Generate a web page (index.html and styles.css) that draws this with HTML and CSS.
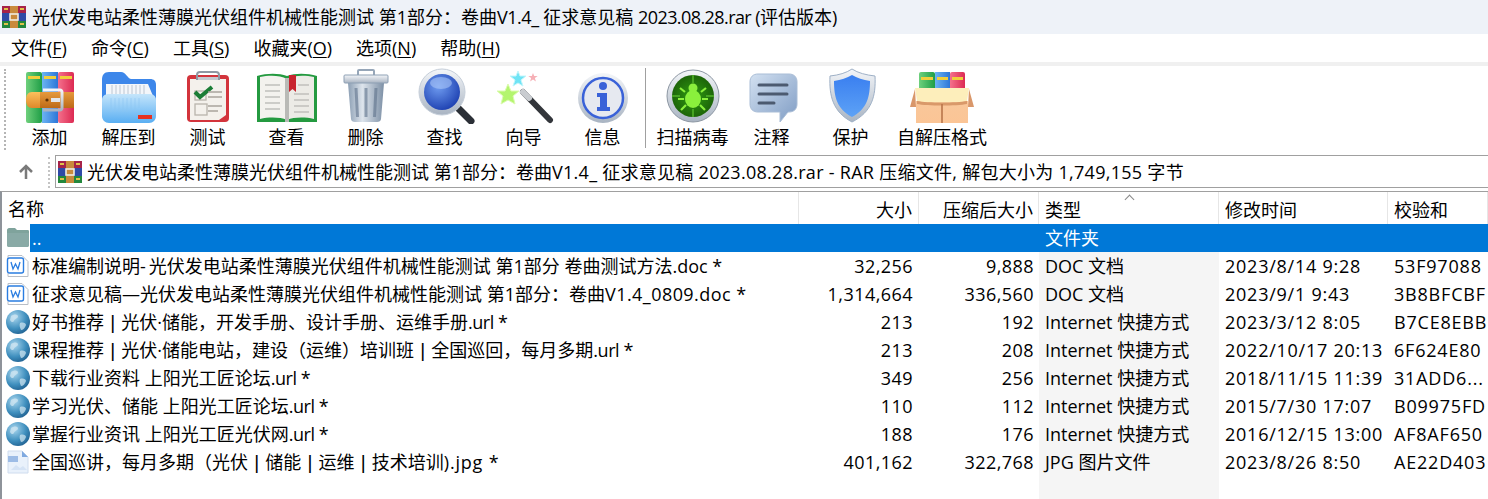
FILE: index.html
```html
<!DOCTYPE html>
<html lang="zh-CN">
<head>
  <meta charset="UTF-8">
  <title>WinRAR</title>
  <link rel="stylesheet" href="styles.css">
</head>
<body>
  <svg class="defs" aria-hidden="true">
    <defs>
      <linearGradient id="gGreen" x1="0" x2="1" y1="0" y2="0"><stop offset="0" stop-color="#6fd07c"/><stop offset="1" stop-color="#1f9e46"/></linearGradient>
      <linearGradient id="gBlue" x1="0" x2="1" y1="0" y2="0"><stop offset="0" stop-color="#6cb4f2"/><stop offset="1" stop-color="#2c76d8"/></linearGradient>
      <linearGradient id="gRed" x1="0" x2="1" y1="0" y2="0"><stop offset="0" stop-color="#f4708c"/><stop offset="1" stop-color="#dc2a52"/></linearGradient>
      <linearGradient id="gBelt" x1="0" x2="0" y1="0" y2="1"><stop offset="0" stop-color="#fbc05c"/><stop offset="1" stop-color="#e0882a"/></linearGradient>
      <linearGradient id="gBeltDark" x1="0" x2="0" y1="0" y2="1"><stop offset="0" stop-color="#e69a3c"/><stop offset="1" stop-color="#bd6a18"/></linearGradient>
      <linearGradient id="gSilver" x1="0" x2="0" y1="0" y2="1"><stop offset="0" stop-color="#f4f6f9"/><stop offset="1" stop-color="#a9b4c2"/></linearGradient>
      <linearGradient id="gFolder" x1="0" x2="0" y1="0" y2="1"><stop offset="0" stop-color="#c4e5fb"/><stop offset="1" stop-color="#59aef2"/></linearGradient>
      <linearGradient id="gCan" x1="0" x2="1" y1="0" y2="0"><stop offset="0" stop-color="#8c9fb4"/><stop offset=".4" stop-color="#dde4ec"/><stop offset="1" stop-color="#7d90a6"/></linearGradient>
      <linearGradient id="gBubble" x1="0" x2="1" y1="0" y2="1"><stop offset="0" stop-color="#d3e1f1"/><stop offset="1" stop-color="#7f9cc4"/></linearGradient>
      <linearGradient id="gShield" x1="0" x2="0" y1="0" y2="1"><stop offset="0" stop-color="#3a7ff0"/><stop offset="1" stop-color="#5da2f6"/></linearGradient>
      <linearGradient id="gBox" x1="0" x2="0" y1="0" y2="1"><stop offset="0" stop-color="#f9c79a"/><stop offset="1" stop-color="#fbc596"/></linearGradient>
      <radialGradient id="gLens" cx=".4" cy=".35" r=".7"><stop offset="0" stop-color="#6f9cf0"/><stop offset="1" stop-color="#1c3fb0"/></radialGradient>
      <radialGradient id="gBug" cx=".5" cy=".5" r=".55"><stop offset="0" stop-color="#2f9d12"/><stop offset="1" stop-color="#1b5f08"/></radialGradient>
      <radialGradient id="gGlobe" cx=".35" cy=".3" r=".8"><stop offset="0" stop-color="#a9d6ee"/><stop offset=".6" stop-color="#3f8fbe"/><stop offset="1" stop-color="#1d5c8c"/></radialGradient>

      <symbol id="rar" viewBox="0 0 24 22">
        <rect x="0" y="0" width="24" height="7" fill="#a62349"/>
        <rect x="0" y="7" width="24" height="8" fill="#2f4aa6"/>
        <rect x="0" y="15" width="24" height="7" fill="#23873c"/>
        <path d="M2 2h4v2H2zM18 2h4v2h-4zM2 17h4v2H2zM18 17h4v2h-4z" fill="#e0c24a"/>
        <rect x="8" y="0" width="8" height="22" fill="#c98a3c"/>
        <rect x="8" y="8" width="8" height="6" fill="none" stroke="#f0ece0" stroke-width="1.600"/>
      </symbol>
      <symbol id="doc" viewBox="0 0 22 24">
        <path d="M1 1.500h14l6 6v15H1z" fill="#fff" stroke="#b9bec6"/>
        <rect x="0.500" y="4" width="16" height="15" rx="2" fill="#fff" stroke="#2a7de1" stroke-width="1.400"/>
        <path d="M4 8l2 7 2.500-5 2.500 5 2-7" fill="none" stroke="#2a7de1" stroke-width="1.300"/>
      </symbol>
      <symbol id="globe" viewBox="0 0 24 24">
        <circle cx="12" cy="12" r="12" fill="url(#gGlobe)"/>
        <path d="M5 6c3-2 6-2 7 0 0 3-3 2-4 5-1 2-3 1-4-1zM14 13c3-1 6 0 6 2-1 3-3 5-5 5-1-2-2-5-1-7z" fill="#d5e8f2" opacity=".7"/>
      </symbol>
    </defs>
  </svg>

  <header class="titlebar">
    <svg class="rar-icon"><use href="#rar"/></svg>
    <span>光伏发电站柔性薄膜光伏组件机械性能测试 第1部分：卷曲<span class="tight">V1.4_</span> 征求意见稿 <span class="tighter">2023.08.28.rar (</span>评估版本)</span>
  </header>

  <nav class="menubar">
    <span>文件(<u>F</u>)</span>
    <span>命令(<u>C</u>)</span>
    <span>工具(<u>S</u>)</span>
    <span>收藏夹(<u>O</u>)</span>
    <span>选项(<u>N</u>)</span>
    <span>帮助(<u>H</u>)</span>
  </nav>

  <div class="toolbar">
    <div class="tool">
      <svg class="tool-icon" viewBox="0 0 64 56">
        <rect x="8" y="4" width="16" height="51" rx="2" fill="url(#gGreen)"/>
        <rect x="24" y="4" width="16" height="51" fill="url(#gBlue)"/>
        <rect x="40" y="4" width="16" height="51" rx="2" fill="url(#gRed)"/>
        <path d="M10 8h12v3H10zM26 8h12v3H26zM42 8h12v3H42z" fill="#f1cf3b"/>
        <path d="M14 24h10v16H14c-4 0-6-3-6-8s2-8 6-8z" fill="url(#gBelt)"/>
        <rect x="22" y="24" width="34" height="16" fill="url(#gBeltDark)"/>
        <circle cx="29" cy="32" r="1.600" fill="#5a3008"/>
        <path d="M25 22h17c1 0 2 1 2 2v16c0 1-1 2-2 2H25" fill="none" stroke="url(#gSilver)" stroke-width="3"/>
        <rect x="33" y="30" width="9" height="4" fill="#e3e7ec"/>
      </svg>
      <span>添加</span>
    </div>
    <div class="tool">
      <svg class="tool-icon" viewBox="0 0 64 56">
        <path d="M5 12c0-5 2-8 7-8h12c5 0 6 6 10 7h19c4 0 6 2 6 6v24H5z" fill="#3d87ea"/>
        <path d="M9 16h42l5 12H9z" fill="#f3f6fa"/>
        <path d="M15 17v9M19 17v9M23 17v9M27 17v9M31 17v9M35 17v9M39 17v9M43 17v9M47 17v9" stroke="#bcc6d2"/>
        <path d="M12 26h40c4 0 7 2 7 6v16c0 4-3 7-7 7H12c-4 0-7-3-7-7V32c0-4 3-6 7-6z" fill="url(#gFolder)"/>
        <path d="M14 30v14M18 30v14M22 30v14M26 30v14M30 30v14M34 30v14M38 30v14M42 30v10" stroke="#8cc6f3" opacity=".6"/>
        <rect x="41" y="47" width="14" height="4" fill="#e8321f"/>
      </svg>
      <span>解压到</span>
    </div>
    <div class="tool">
      <svg class="tool-icon" viewBox="0 0 64 56">
        <rect x="11" y="7" width="42" height="47" rx="4" fill="#d3343c"/>
        <path d="M14 11h36v36l-7 5H14z" fill="#f4f1ec"/>
        <path d="M21 12V7c0-2 1-3 3-3h16c2 0 3 1 3 3v5" fill="none" stroke="#8f98a3" stroke-width="2"/>
        <rect x="22" y="9" width="20" height="3" fill="#c4c9cf"/>
        <rect x="19" y="23" width="11" height="9" fill="none" stroke="#b9b4ac" stroke-width="1.300"/>
        <path d="M19 24l5 5 12-10" fill="none" stroke="#1b7d36" stroke-width="4"/>
        <rect x="19" y="36" width="12" height="11" fill="none" stroke="#b9b4ac" stroke-width="1.300"/>
        <path d="M32 24h14M32 29h14M32 38h14M32 43h10" stroke="#a9a49c" stroke-width="1.500"/>
      </svg>
      <span>测试</span>
    </div>
    <div class="tool">
      <svg class="tool-icon" viewBox="0 0 64 56">
        <path d="M2 8c10-3 22-3 30 0 8-3 20-3 30 0v46H2z" fill="#249a40"/>
        <path d="M5 9c9-2 20-2 27 2v41c-7-3-18-3-27-1z" fill="#f3f2ee"/>
        <path d="M59 9c-9-2-20-2-27 2v41c7-3 18-3 27-1z" fill="#ecebe6"/>
        <rect x="30" y="10" width="4" height="44" fill="#b9bab6"/>
        <path d="M10 17h15M10 23h15M10 29h15M10 35h15M10 41h15M39 26h15M39 32h15M39 38h15M39 44h15M43 17h11" stroke="#c0c0bc" stroke-width="1.500"/>
        <path d="M34 7h7v17l-3.500-3-3.500 3z" fill="#c8232e"/>
      </svg>
      <span>查看</span>
    </div>
    <div class="tool">
      <svg class="tool-icon" viewBox="0 0 64 56">
        <rect x="24" y="2" width="16" height="7" rx="1" fill="none" stroke="#96a6b8" stroke-width="2"/>
        <path d="M14 15h36l-3 36c0 2-2 3-4 3H21c-2 0-4-1-4-3z" fill="url(#gCan)"/>
        <rect x="10" y="7" width="44" height="8" rx="1" fill="url(#gSilver)" stroke="#8ea0b4"/>
        <path d="M22 20l1.500 29M32 20v29M42 20l-1.500 29" stroke="#5f738c" stroke-width="3" opacity=".6"/>
      </svg>
      <span>删除</span>
    </div>
    <div class="tool">
      <svg class="tool-icon" viewBox="0 0 64 56">
        <path d="M44 39l14 14" stroke="#2b2f36" stroke-width="7" stroke-linecap="round"/>
        <circle cx="29" cy="24" r="23" fill="url(#gSilver)" stroke="#c5ced9"/>
        <circle cx="29" cy="24" r="18" fill="url(#gLens)"/>
        <ellipse cx="28" cy="15" rx="11" ry="6" fill="#a9c4f6" opacity=".6"/>
      </svg>
      <span>查找</span>
    </div>
    <div class="tool">
      <svg class="tool-icon" viewBox="0 0 64 56">
        <path d="M16 16l3 7 8 0-6 5 2 8-7-4-7 4 2-8-6-5 8 0z" fill="#b4f56e" stroke="#dcfbb0"/>
        <path d="M26 3l2 5 6 0-5 4 2 6-5-3-5 3 2-6-5-4 6 0z" fill="#6fe4f5" stroke="#c4f6fc"/>
        <path d="M41 5l1.200 3 3.500 0-2.800 2 1 3.500-2.900-2-2.900 2 1-3.500-2.800-2 3.500 0z" fill="#f6b0b6"/>
        <path d="M31 24l27 28" stroke="#33363b" stroke-width="6" stroke-linecap="round"/>
        <path d="M31 24l6 6" stroke="#c9ccd0" stroke-width="6" stroke-linecap="round"/>
      </svg>
      <span>向导</span>
    </div>
    <div class="tool">
      <svg class="tool-icon" viewBox="0 0 64 56">
        <circle cx="32" cy="30" r="25" fill="url(#gSilver)"/>
        <circle cx="32" cy="30" r="20" fill="#e6e9f0" stroke="#3a62d8" stroke-width="2.500"/>
        <circle cx="32" cy="18" r="4" fill="#3a62d8"/>
        <path d="M26 25h10v14h3v4H26v-4h3V29h-3z" fill="#3a62d8"/>
      </svg>
      <span>信息</span>
    </div>
    <div class="tool-sep"></div>
    <div class="tool">
      <svg class="tool-icon" viewBox="0 0 64 56">
        <circle cx="32" cy="28" r="26" fill="url(#gSilver)" stroke="#8d97a3"/>
        <circle cx="32" cy="28" r="21" fill="url(#gBug)"/>
        <path d="M32 7v8M32 41v8M11 28h8M45 28h8" stroke="#53b52a" stroke-width="1.500"/>
        <ellipse cx="32" cy="31" rx="8" ry="9" fill="#8af03c"/>
        <circle cx="32" cy="20" r="4.500" fill="#8af03c"/>
        <path d="M24 24l-5-4M40 24l5-4M23 31h-6M41 31h6M25 37l-5 5M39 37l5 5" stroke="#8af03c" stroke-width="2.200"/>
      </svg>
      <span>扫描病毒</span>
    </div>
    <div class="tool">
      <svg class="tool-icon" viewBox="0 0 64 56">
        <path d="M18 6h31c5 0 8 3 8 8v22c0 5-3 8-8 8h-1l-8 10v-10H18c-5 0-8-3-8-8V14c0-5 3-8 8-8z" fill="url(#gBubble)" stroke="#a9bdd6"/>
        <path d="M19 17h28M19 26h28M19 35h15" stroke="#4c5a70" stroke-width="3" stroke-linecap="round"/>
      </svg>
      <span>注释</span>
    </div>
    <div class="tool">
      <svg class="tool-icon" viewBox="0 0 64 56">
        <path d="M33 1c6 4 14 6 23 7 1 20-3 36-23 46C14 44 10 28 11 8c9-1 16-3 22-7z" fill="url(#gSilver)" stroke="#9eb0c6"/>
        <path d="M33 7c5 3 11 5 18 6 0 16-3 28-18 36-15-8-18-20-18-36 7-1 13-3 18-6z" fill="url(#gShield)"/>
      </svg>
      <span>保护</span>
    </div>
    <div class="tool">
      <svg class="tool-icon" viewBox="0 0 64 56">
        <rect x="9" y="4" width="16" height="22" rx="2" fill="url(#gGreen)"/>
        <rect x="25" y="4" width="15" height="22" fill="url(#gBlue)"/>
        <rect x="40" y="4" width="15" height="22" rx="2" fill="url(#gRed)"/>
        <path d="M11 9h12v3H11zM27 9h11v3H27zM42 9h11v3H42z" fill="#f1cf3b"/>
        <path d="M5 21L0 39h6zM59 21l5 18h-6z" fill="#d9976a"/>
        <path d="M6 33h52v22H6z" fill="url(#gBox)"/>
        <path d="M5 20h54l-2 13c-10 2-40 2-50 0z" fill="#fdeebb"/>
        <path d="M7 33c10 2 40 2 50 0v3c-10 2-40 2-50 0z" fill="#d9996a"/>
        <path d="M32 36v19" stroke="#b9754a" stroke-width="1.600"/>
      </svg>
      <span>自解压格式</span>
    </div>
  </div>

  <div class="addressbar">
    <div class="up-btn">
      <svg width="18" height="18" viewBox="0 0 18 18"><path d="M9 16V3M3 9l6-6 6 6" fill="none" stroke="#7a7a7a" stroke-width="2.500"/></svg>
    </div>
    <div class="address">
      <svg class="rar-icon"><use href="#rar"/></svg>
      <span>光伏发电站柔性薄膜光伏组件机械性能测试 第1部分：卷曲<span class="addr-tail">V1.4_ 征求意见稿 2023.08.28.rar - RAR 压缩文件, 解包大小为 1,749,155 字节</span></span>
    </div>
  </div>

  <main class="list">
    <div class="row head">
      <div class="c-name">名称</div>
      <div class="c-size">大小</div>
      <div class="c-pack">压缩后大小</div>
      <div class="c-type sorted">类型</div>
      <div class="c-date">修改时间</div>
      <div class="c-crc">校验和</div>
    </div>
    <div class="row up">
      <div class="c-name">
        <svg class="file-icon" viewBox="0 0 24 24"><path d="M1 4c0-1 1-2 2-2h6l2 2h11c1 0 1 1 1 2v13c0 1-1 2-2 2H3c-1 0-2-1-2-2z" fill="#7fa39c"/><path d="M1 7h22v12c0 1-1 2-2 2H3c-1 0-2-1-2-2z" fill="#89aaa6"/></svg>
        <span class="selected">..</span>
      </div>
      <div class="c-size selected"></div>
      <div class="c-pack selected"></div>
      <div class="c-type selected">文件夹</div>
      <div class="c-date selected"></div>
      <div class="c-crc selected"></div>
    </div>
    <div class="row">
      <div class="c-name"><svg class="file-icon"><use href="#doc"/></svg><span>标准编制说明<span class="dash">-</span>光伏发电站柔性薄膜光伏组件机械性能测试 第1部分 卷曲测试方法.doc *</span></div>
      <div class="c-size">32,256</div><div class="c-pack">9,888</div><div class="c-type">DOC 文档</div><div class="c-date">2023/8/14 9:28</div><div class="c-crc">53F97088</div>
    </div>
    <div class="row">
      <div class="c-name"><svg class="file-icon"><use href="#doc"/></svg><span>征求意见稿—光伏发电站柔性薄膜光伏组件机械性能测试 第1部分：卷曲<span class="wide">V1.4_0809.doc *</span></span></div>
      <div class="c-size">1,314,664</div><div class="c-pack">336,560</div><div class="c-type">DOC 文档</div><div class="c-date">2023/9/1 9:43</div><div class="c-crc">3B8BFCBF</div>
    </div>
    <div class="row">
      <div class="c-name"><svg class="file-icon"><use href="#globe"/></svg><span>好书推荐 <span class="bar">|</span> 光伏·储能，开发手册、设计手册、运维手册<span class="tight">.url *</span></span></div>
      <div class="c-size">213</div><div class="c-pack">192</div><div class="c-type">Internet 快捷方式</div><div class="c-date">2023/3/12 8:05</div><div class="c-crc">B7CE8EBB</div>
    </div>
    <div class="row">
      <div class="c-name"><svg class="file-icon"><use href="#globe"/></svg><span>课程推荐 <span class="bar">|</span> 光伏·储能电站，建设（运维）培训班 <span class="bar">|</span> 全国巡回，每月多期<span class="tight">.url *</span></span></div>
      <div class="c-size">213</div><div class="c-pack">208</div><div class="c-type">Internet 快捷方式</div><div class="c-date">2022/10/17 20:13</div><div class="c-crc">6F624E80</div>
    </div>
    <div class="row">
      <div class="c-name"><svg class="file-icon"><use href="#globe"/></svg><span>下载行业资料 上阳光工匠论坛<span class="tight">.url *</span></span></div>
      <div class="c-size">349</div><div class="c-pack">256</div><div class="c-type">Internet 快捷方式</div><div class="c-date">2018/11/15 11:39</div><div class="c-crc">31ADD6...</div>
    </div>
    <div class="row">
      <div class="c-name"><svg class="file-icon"><use href="#globe"/></svg><span>学习光伏、储能 上阳光工匠论坛<span class="tight">.url *</span></span></div>
      <div class="c-size">110</div><div class="c-pack">112</div><div class="c-type">Internet 快捷方式</div><div class="c-date">2015/7/30 17:07</div><div class="c-crc">B09975FD</div>
    </div>
    <div class="row">
      <div class="c-name"><svg class="file-icon"><use href="#globe"/></svg><span>掌握行业资讯 上阳光工匠光伏网<span class="tight">.url *</span></span></div>
      <div class="c-size">188</div><div class="c-pack">176</div><div class="c-type">Internet 快捷方式</div><div class="c-date">2016/12/15 13:00</div><div class="c-crc">AF8AF650</div>
    </div>
    <div class="row">
      <div class="c-name">
        <svg class="file-icon" viewBox="0 0 22 24"><path d="M1 1h14l6 6v16H1z" fill="#e9f1fb" stroke="#cfdcee"/><path d="M15 1v6h6z" fill="#7fa9e0"/><rect x="1" y="6" width="10" height="6" fill="#9dbce6"/><path d="M4 20l5-5 4 3 3-2 4 4z" fill="#d5e3f5"/></svg>
        <span>全国巡讲，每月多期（光伏 <span class="bar">|</span> 储能 <span class="bar">|</span> 运维 <span class="bar">|</span> 技术培训<span class="wider">).jpg *</span></span>
      </div>
      <div class="c-size">401,162</div><div class="c-pack">322,768</div><div class="c-type">JPG 图片文件</div><div class="c-date">2023/8/26 8:50</div><div class="c-crc">AE22D403</div>
    </div>
    <div class="row filler">
      <div class="c-name"></div><div class="c-size"></div><div class="c-pack"></div><div class="c-type"></div><div class="c-date"></div><div class="c-crc"></div>
    </div>
  </main>
</body>
</html>
```

FILE: styles.css
```css
html, body { margin: 0; height: 100%; }
body {
  display: flex; flex-direction: column; height: 499px; overflow: hidden;
  background: #fff; color: #000;
  font-family: "Open Sans", "Noto Sans CJK SC", sans-serif; font-size: 18px; line-height: 24px;
}
.defs { display: block; width: 0; height: 0; }

.titlebar { display: flex; align-items: center; gap: 6px; height: 34px; padding-left: 2px; background: #eef2f8; white-space: nowrap; }
.rar-icon { width: 24px; height: 22px; flex: none; }
.tight { letter-spacing: -.45px; }
.tighter { letter-spacing: -.58px; }
.wide { letter-spacing: .45px; }
.wider { letter-spacing: .8px; }
.dash { letter-spacing: 3px; }
.bar { font-weight: 600; margin: 0 -1px; }

.menubar { display: flex; gap: 24px; height: 28px; padding-left: 11px; align-items: center; background: #fff; }
.menubar u { text-underline-offset: 2px; }

.toolbar {
  display: flex; height: 86px; margin-top: 4px; padding-left: 10px;
  background: #fff; position: relative;
  box-shadow: 0 -4px 0 #f0f0f0;
}
.toolbar::before { content: ""; position: absolute; left: 4px; top: 3px; bottom: 2px; border-left: 2px dotted #b5b5b5; }
.tool { display: flex; flex-direction: column; align-items: center; min-width: 79px; padding-top: 2px; }
.tool-icon { width: 64px; height: 56px; flex: none; }
.tool span { margin-top: 1px; white-space: nowrap; }
.tool-sep { width: 1px; height: 80px; margin: 2px 7px 0 3px; background: #a0a0a0; }
.tool:last-child { padding: 2px 6px 0 7px; }

.addressbar { display: flex; height: 33px; margin-top: 3px; }
.up-btn { position: relative; width: 55px; flex: none; display: flex; align-items: center; padding-left: 17px; box-sizing: border-box; }
.up-btn::after { content: ""; position: absolute; left: 48px; top: 2px; bottom: 0; border-left: 2px dotted #c4c4c4; }
.address { flex: 1; display: flex; align-items: center; gap: 5px; padding-left: 2px; border: 1px solid #a0a0a0; border-right: 0; white-space: nowrap; }
.addr-tail { letter-spacing: .28px; }

.list { flex: 1; display: flex; flex-direction: column; margin-top: 3px; border-top: 1px solid #a0a0a0; border-left: 2px solid #8e939a; box-sizing: border-box; min-height: 0; }
.row { display: grid; grid-template-columns: 797px 120px 120px 180px 169px 1fr; height: 28px; line-height: 28px; white-space: nowrap; }
.row.head { height: 32px; line-height: 36px; }
.row.head > div { border-right: 1px solid #e6e6e6; }
.row.filler { flex: 1; height: auto; }
.row > div { min-width: 0; overflow: hidden; }

.c-name { display: flex; align-items: center; }
.head .c-name { padding: 2px 0 0 6px; box-sizing: border-box; }
.file-icon { width: 24px; height: 24px; flex: none; margin: 0 0 0 4px; }
.c-name > span { padding-left: 2px; }
.c-size, .c-pack { text-align: right; box-sizing: border-box; letter-spacing: .45px; }
.c-size { padding-right: 6px; }
.c-pack { padding-right: 5px; }
.head .c-size, .head .c-pack { letter-spacing: 0; }
.c-type { padding-left: 6px; background: #f5f5f5; }
.c-date { padding-left: 6px; letter-spacing: .75px; }
.c-crc { padding-left: 6px; letter-spacing: .8px; }
.head .c-date, .head .c-crc { letter-spacing: 0; }
.head .c-type { background: #fff; position: relative; }
.sorted::after { content: ""; position: absolute; left: 87px; top: 4px; width: 6px; height: 6px; border-left: 1px solid #888; border-top: 1px solid #888; transform: rotate(45deg); }

.selected { background: #0078d7; color: #fff; }
.up .c-name > span { flex: 1; align-self: stretch; }
.up .c-type.selected { background: #0078d7; }
```
